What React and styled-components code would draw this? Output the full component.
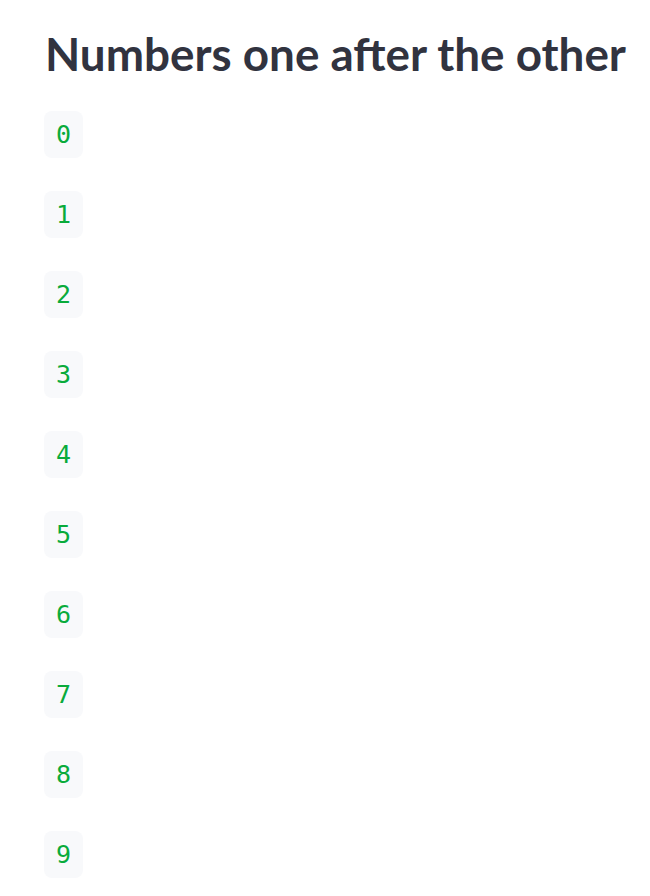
import React from "react"
import styled, { createGlobalStyle } from "styled-components"

const GlobalStyle = createGlobalStyle`
  body {
    margin: 0;
    background: #ffffff;
    font-family: Lato, "Noto Sans", sans-serif;
  }
`

const Main = styled.main`
  padding: 23px 0 0 45px;
  display: flex;
  flex-direction: column;
`

const Title = styled.h1`
  margin: 0 0 26px;
  font-family: Lato, "Noto Sans", sans-serif;
  font-size: 45.8px;
  font-weight: 700;
  line-height: 62px;
  color: #31333f;
  white-space: nowrap;
`

const List = styled.div`
  display: flex;
  flex-direction: column;
  gap: 33px;
`

const Code = styled.code`
  align-self: flex-start;
  box-sizing: border-box;
  width: 39px;
  height: 47px;
  margin-left: -1px;
  display: flex;
  align-items: center;
  justify-content: center;
  background: #f8f9fb;
  border-radius: 8px;
  color: #09ab3b;
  font-family: "DejaVu Sans Mono", "Liberation Mono", monospace;
  font-size: 25px;
`

export default function App() {
  const numbers = [0, 1, 2, 3, 4, 5, 6, 7, 8, 9]
  return (
    <>
      <GlobalStyle />
      <Main>
        <Title>Numbers one after the other</Title>
        <List>
          {numbers.map(n => (
            <Code key={n}>{n}</Code>
          ))}
        </List>
      </Main>
    </>
  )
}
